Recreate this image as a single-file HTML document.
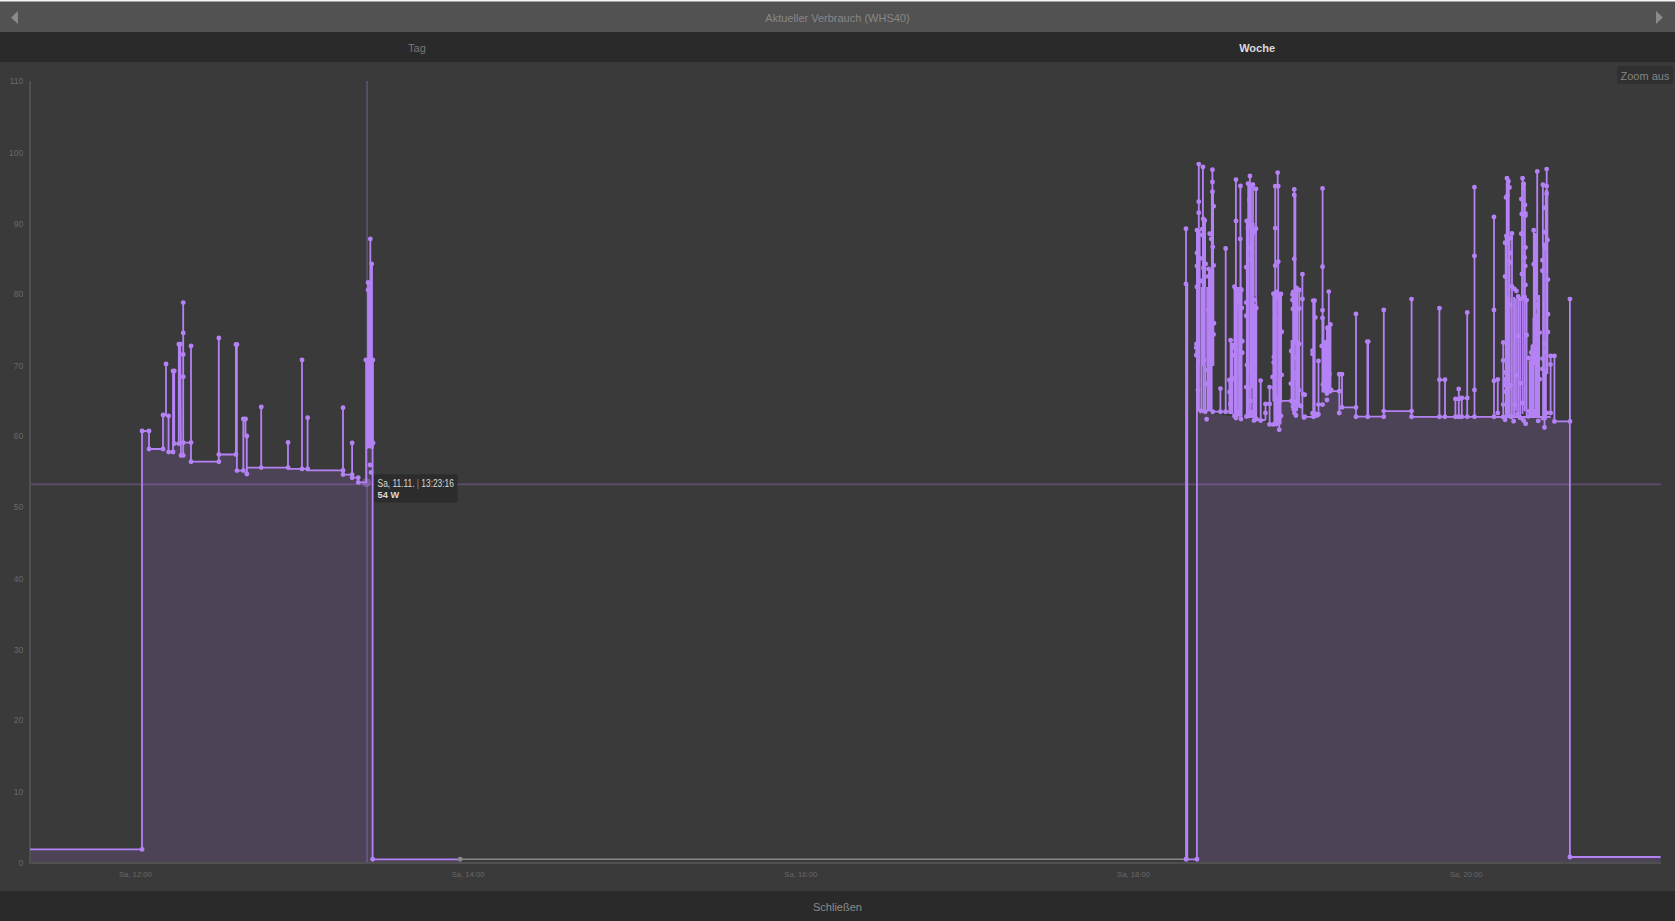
<!DOCTYPE html>
<html lang="de"><head><meta charset="utf-8"><title>Aktueller Verbrauch (WHS40)</title>
<style>
html,body{margin:0;padding:0;background:#3a3a3a;overflow:hidden}
body{width:1675px;height:921px;position:relative;font-family:"Liberation Sans",Arial,sans-serif;color:#888}
.topline{position:absolute;left:0;top:0;width:100%;height:2px;background:linear-gradient(#f6f6f6 0,#f6f6f6 1px,#a4a4a4 1px,#a4a4a4 2px)}
.head{position:absolute;left:0;top:2px;width:100%;height:30px;background:#525252;text-align:center;line-height:33px;font-size:11px;color:#878787}
.arr{position:absolute;top:9px;width:7px;height:13px}
.tabs{position:absolute;left:0;top:32px;width:100%;height:30px;background:#2a2a2a;font-size:11px}
.tabs div{position:absolute;top:0;width:100px;text-align:center;color:#787878;line-height:33px}
.tabs div.on{color:#dcdcdc;font-weight:bold}
.zoom{position:absolute;left:1617px;top:66px;width:56px;height:18px;background:#303030;border-radius:3px;font-size:11px;line-height:21px;text-align:center;color:#858585}
.foot{position:absolute;left:0;top:891px;width:100%;height:30px;background:#2a2a2a;text-align:center;line-height:32px;font-size:11px;color:#8a8a8a}
.ax{font-family:"Liberation Sans",Arial,sans-serif;font-size:8.6px;fill:#686868}
.xl{font-size:7.7px}
.tip{position:absolute;left:374px;top:474px;width:84px;height:28.5px;background:#2b2b2b;border-radius:3px;color:#e0e0e0;font-size:8.6px;line-height:11.5px;box-sizing:border-box;padding:3.5px 0 0 3.5px;white-space:nowrap;letter-spacing:-0.2px}
.tp{font-family:"Liberation Sans",Arial,sans-serif;font-size:10px;fill:#dadada}
.tb{font-weight:bold;font-size:9px}
</style></head><body>
<div class="head">Aktueller Verbrauch (WHS40)
<svg class="arr" style="left:11px" viewBox="0 0 7 13"><path d="M7 0V13L0 6.5Z" fill="#8a8a8a"/></svg>
<svg class="arr" style="left:1656px" viewBox="0 0 7 13"><path d="M0 0V13L7 6.5Z" fill="#8a8a8a"/></svg>
</div>
<div class="topline"></div>
<div class="tabs"><div style="left:366.9px">Tag</div><div class="on" style="left:1207.1px">Woche</div></div>
<svg width="1675" height="829" viewBox="0 62 1675 829" style="position:absolute;left:0;top:62px">
<path d="M30 863 L30 849.4 L142 849.4 L142 431 L149 431 L149 449 L163 449 L163 415 L166 415 L166 364 L166 415.5 L168.6 416 L168.6 452 L173 452 L173 371 L174.2 371 L174.2 443.6 L178.8 443.6 L178.8 344.3 L180.3 344.3 L181 455.4 L183.2 455.4 L183.2 302.6 L183.2 442.6 L191 442.6 L191 346 L191 461.7 L218.8 461.7 L218.8 338 L218.8 454.5 L235.9 454.5 L235.9 344.5 L236.9 344.5 L236.9 470.6 L243.3 470.6 L243.3 419 L245.5 419 L245.5 436 L246.8 436 L246.8 474 L247 467.6 L261.2 467.6 L261.2 407 L261.2 467.6 L288 467.6 L288 442.5 L288 468.9 L302 468.9 L302 360 L302 468.9 L307.6 468.9 L307.6 417.7 L307.6 470.4 L343 470.4 L343 407.7 L343 474.6 L352.1 474.6 L352.1 443 L352.1 477.7 L358.2 477.7 L358.2 482.4 L366.1 482.4 L366.1 482.4 L366.1 360 L366.6 360 L366.6 448 L367.2 448 L367.2 360 L367.6 360 L367.6 445 L368 445 L368 282.5 L368.4 282.5 L368.4 440 L368.8 440 L368.8 290 L369.3 290 L369.3 447 L369.7 447 L369.7 300 L370.3 300 L370.3 238.9 L370.3 238.9 L370.3 445 L370.8 445 L370.8 270 L371.2 270 L371.2 448 L371.6 448 L371.6 264 L372 264 L372 446 L372.3 446 L372.3 360 L372.6 360 L372.6 472.4 L372.6 472.4 L372.6 360 L373 360 L373 448 L372.6 448 L372.6 859.3 L460.2 859.3 L460.2 863Z" fill="#b482f5" fill-opacity="0.15"/>
<path d="M1197 863 L1197 411.7 L1257.5 420 L1273.6 424 L1281.4 400.8 L1291 400.8 L1302.4 404 L1302.4 416.8 L1318.5 416.8 L1322 392 L1330 391.2 L1339.6 391.2 L1339.6 407.4 L1356 407.4 L1356 416.7 L1383.8 416.7 L1383.8 411.1 L1411.6 411.1 L1411.6 416.8 L1554.4 417 L1554.4 421.4 L1569.6 421.4 L1569.6 857 L1660.6 857 L1660.6 863Z" fill="#b482f5" fill-opacity="0.15"/>
<path d="M29 81H31V862H1661V864H29Z" fill="#505050"/>
<path d="M460.2 859.3H1186" stroke="#888" stroke-width="1.4" fill="none"/>
<path d="M30 849.4 L142 849.4 L142 431 L149 431 L149 449 L163 449 L163 415 L166 415 L166 364 L166 415.5 L168.6 416 L168.6 452 L173 452 L173 371 L174.2 371 L174.2 443.6 L178.8 443.6 L178.8 344.3 L180.3 344.3 L181 455.4 L183.2 455.4 L183.2 302.6 L183.2 442.6 L191 442.6 L191 346 L191 461.7 L218.8 461.7 L218.8 338 L218.8 454.5 L235.9 454.5 L235.9 344.5 L236.9 344.5 L236.9 470.6 L243.3 470.6 L243.3 419 L245.5 419 L245.5 436 L246.8 436 L246.8 474 L247 467.6 L261.2 467.6 L261.2 407 L261.2 467.6 L288 467.6 L288 442.5 L288 468.9 L302 468.9 L302 360 L302 468.9 L307.6 468.9 L307.6 417.7 L307.6 470.4 L343 470.4 L343 407.7 L343 474.6 L352.1 474.6 L352.1 443 L352.1 477.7 L358.2 477.7 L358.2 482.4 L366.1 482.4 L366.1 482.4 L366.1 360 L366.6 360 L366.6 448 L367.2 448 L367.2 360 L367.6 360 L367.6 445 L368 445 L368 282.5 L368.4 282.5 L368.4 440 L368.8 440 L368.8 290 L369.3 290 L369.3 447 L369.7 447 L369.7 300 L370.3 300 L370.3 238.9 L370.3 238.9 L370.3 445 L370.8 445 L370.8 270 L371.2 270 L371.2 448 L371.6 448 L371.6 264 L372 264 L372 446 L372.3 446 L372.3 360 L372.6 360 L372.6 472.4 L372.6 472.4 L372.6 360 L373 360 L373 448 L372.6 448 L372.6 859.3 L460.2 859.3M1186 228.7V859.3M1187.3 283.9V859.3M1196.9 230.3V859.3M1198.8 164.1V232M1202.9 166.9V220M1212.4 169.8V195M1201.3 366V411.5M1203.5 366V411.5M1205.4 366V411.5M1220.4 388.6V411.7M1225.7 248.5V411.7M1230.6 340.2V414M1232.2 345V414M1229.4 380V414M1235.9 179.8V290M1240.4 186V240M1249.9 176V186M1253 184.8V225M1256 188.9V420M1260.7 380.6V420.5M1265.5 403.9V420M1269.6 387.1V424.4M1277.7 172.6V187M1275.2 186.3V295M1278.2 186.3V295M1279.2 420V429.7M1294.3 189.4V291M1295.4 195V291M1299.3 290V405M1302.4 274.3V416.8M1318.5 361V414.5M1322.6 188.4V342M1328.8 291.6V327M1339.3 374.2V413M1342 374.2V407.4M1356 313.9V416.7M1383.8 309.9V416.7M1411.6 299.1V416.8M1439.4 308.3V416.8M1445 379.8V416.8M1455.4 399V416.8M1458.8 389V416.8M1461.8 398V416.8M1467.2 312.5V416.8M1474.5 187.2V416.8M1494 217V416.8M1497.8 379.5V413M1503.2 342.5V417M1507 178.3V190M1508.5 181.3V190M1512 233.4V417M1516 298.3V411.5M1518.1 296.4V415.1M1520.1 299V418.3M1522.5 300V414M1524.6 297V411.2M1526.6 300.1V416.4M1522.6 178.3V190M1523.7 183.6V190M1533.8 230.3V320M1535.5 233V320M1537.2 171.4V300M1542.9 184.7V247M1546.7 169.1V192M1544.5 418V427.5M1550.6 355.9V413M1554.4 355.9V421.4M1569.9 299.1V857M1186.4 859.3H1197M1213 411.7H1229M1229.6 340.2H1233.6M1257 420H1265.5M1264.8 403.9H1269.6M1269.6 424.4H1273.4M1281.5 400.8H1290.6M1302.4 416.8H1318.5M1318.5 404.6H1322.6M1330.6 391.2H1339.8M1339.3 374.2H1342M1342 407.4H1356M1356 416.7H1383.8M1383.8 411.1H1411.6M1411.6 416.8H1495M1439.4 379.8H1445M1455.4 398.4H1467.2M1494 380.3H1497.8M1495 417H1550.6M1550.6 355.9H1554.4M1548 413H1552.5M1554.4 421.4H1569.6M1569.6 857H1660.6" fill="none" stroke="#b482f5" stroke-width="1.8" stroke-linejoin="round"/>
<path d="M1196 230H1200.6V290H1196ZM1202 219H1206V290H1202ZM1210.9 192H1214V270H1210.9ZM1208 269H1214.3V334H1208ZM1196 287H1214.3V366H1196ZM1196 366H1199.9V411.5H1196ZM1206.7 366H1212.6V411.5H1206.7ZM1239.5 239H1241.6V290H1239.5ZM1233.6 287H1242.5V416.7H1233.6ZM1247.3 183.6H1251.9V225H1247.3ZM1245.9 222.8H1254.6V418H1245.9ZM1254.6 300H1257.2V418H1254.6ZM1272.4 293.7H1282V401.6H1272.4ZM1273.4 401H1281.5V424.4H1273.4ZM1292.2 290H1298.3V341H1292.2ZM1290.6 340H1299.2V404H1290.6ZM1291.5 404H1298V411H1291.5ZM1312.3 300.6H1315.6V416.8H1312.3ZM1321.6 318H1324.4V342H1321.6ZM1326 325.5H1331.4V392H1326ZM1321.5 340H1331.4V392.4H1321.5ZM1366.5 341.6H1369V416.7H1366.5ZM1505.8 183H1509.7V238H1505.8ZM1504.8 236H1510.5V417H1504.8ZM1505 297H1515V417H1505ZM1521.1 183H1525.8V300H1521.1ZM1528.7 360.5H1540V417H1528.7ZM1536.5 295H1540V361H1536.5ZM1532.5 318H1536.5V361H1532.5ZM1530.5 345H1532.5V361H1530.5ZM1544.8 190H1548.3V247H1544.8ZM1542.2 245H1548.3V374H1542.2ZM1542.2 374H1546.8V420H1542.2Z" fill="#b482f5"/>
<path d="M1200.5 287V366" stroke="#40384a" stroke-width="0.9" stroke-opacity="0.45"/>
<path d="M1206 287V366" stroke="#40384a" stroke-width="1.1" stroke-opacity="0.5"/>
<path d="M1252 388V410" stroke="#40384a" stroke-width="1.3" stroke-opacity="0.45"/>
<path d="M1254.9 296V307" stroke="#40384a" stroke-width="1.2" stroke-opacity="0.6"/>
<path d="M1510.6 297V415" stroke="#40384a" stroke-width="0.8" stroke-opacity="0.4"/>
<path d="M1512.9 297V415" stroke="#40384a" stroke-width="0.8" stroke-opacity="0.4"/>
<path d="M1277.3 300V395" stroke="#40384a" stroke-width="0.7" stroke-opacity="0.3"/>
<path d="M1238 300V410" stroke="#40384a" stroke-width="0.7" stroke-opacity="0.25"/>
<path d="M1295 345V400" stroke="#40384a" stroke-width="0.7" stroke-opacity="0.3"/>
<path d="M1534.5 365V412" stroke="#40384a" stroke-width="0.8" stroke-opacity="0.35"/>
<path d="M1545.2 250V370" stroke="#40384a" stroke-width="0.7" stroke-opacity="0.3"/>
<path d="M1249.5 230V410" stroke="#40384a" stroke-width="0.7" stroke-opacity="0.25"/>
<path d="M1523.4 190V296" stroke="#40384a" stroke-width="0.7" stroke-opacity="0.25"/>
<path d="M1507.6 240V296" stroke="#40384a" stroke-width="0.7" stroke-opacity="0.25"/>
<path d="M139.6 849.4a2.45 2.45 0 1 0 4.9 0a2.45 2.45 0 1 0 -4.9 0M139.6 431a2.45 2.45 0 1 0 4.9 0a2.45 2.45 0 1 0 -4.9 0M146.6 431a2.45 2.45 0 1 0 4.9 0a2.45 2.45 0 1 0 -4.9 0M146.6 449a2.45 2.45 0 1 0 4.9 0a2.45 2.45 0 1 0 -4.9 0M160.6 449a2.45 2.45 0 1 0 4.9 0a2.45 2.45 0 1 0 -4.9 0M160.6 415a2.45 2.45 0 1 0 4.9 0a2.45 2.45 0 1 0 -4.9 0M163.6 364a2.45 2.45 0 1 0 4.9 0a2.45 2.45 0 1 0 -4.9 0M166.2 416a2.45 2.45 0 1 0 4.9 0a2.45 2.45 0 1 0 -4.9 0M166.2 452a2.45 2.45 0 1 0 4.9 0a2.45 2.45 0 1 0 -4.9 0M170.6 452a2.45 2.45 0 1 0 4.9 0a2.45 2.45 0 1 0 -4.9 0M170.6 371a2.45 2.45 0 1 0 4.9 0a2.45 2.45 0 1 0 -4.9 0M171.8 371a2.45 2.45 0 1 0 4.9 0a2.45 2.45 0 1 0 -4.9 0M171.8 443.6a2.45 2.45 0 1 0 4.9 0a2.45 2.45 0 1 0 -4.9 0M176.4 443.6a2.45 2.45 0 1 0 4.9 0a2.45 2.45 0 1 0 -4.9 0M176.4 344.3a2.45 2.45 0 1 0 4.9 0a2.45 2.45 0 1 0 -4.9 0M177.9 344.3a2.45 2.45 0 1 0 4.9 0a2.45 2.45 0 1 0 -4.9 0M178.6 455.4a2.45 2.45 0 1 0 4.9 0a2.45 2.45 0 1 0 -4.9 0M180.8 455.4a2.45 2.45 0 1 0 4.9 0a2.45 2.45 0 1 0 -4.9 0M180.8 302.6a2.45 2.45 0 1 0 4.9 0a2.45 2.45 0 1 0 -4.9 0M180.8 333a2.45 2.45 0 1 0 4.9 0a2.45 2.45 0 1 0 -4.9 0M180.8 354.5a2.45 2.45 0 1 0 4.9 0a2.45 2.45 0 1 0 -4.9 0M180.8 376.8a2.45 2.45 0 1 0 4.9 0a2.45 2.45 0 1 0 -4.9 0M180.8 442.6a2.45 2.45 0 1 0 4.9 0a2.45 2.45 0 1 0 -4.9 0M188.6 442.6a2.45 2.45 0 1 0 4.9 0a2.45 2.45 0 1 0 -4.9 0M188.6 346a2.45 2.45 0 1 0 4.9 0a2.45 2.45 0 1 0 -4.9 0M188.6 461.7a2.45 2.45 0 1 0 4.9 0a2.45 2.45 0 1 0 -4.9 0M216.4 461.7a2.45 2.45 0 1 0 4.9 0a2.45 2.45 0 1 0 -4.9 0M216.4 338a2.45 2.45 0 1 0 4.9 0a2.45 2.45 0 1 0 -4.9 0M216.4 454.5a2.45 2.45 0 1 0 4.9 0a2.45 2.45 0 1 0 -4.9 0M233.5 454.5a2.45 2.45 0 1 0 4.9 0a2.45 2.45 0 1 0 -4.9 0M233.5 344.5a2.45 2.45 0 1 0 4.9 0a2.45 2.45 0 1 0 -4.9 0M234.5 344.5a2.45 2.45 0 1 0 4.9 0a2.45 2.45 0 1 0 -4.9 0M234.5 470.6a2.45 2.45 0 1 0 4.9 0a2.45 2.45 0 1 0 -4.9 0M240.9 419a2.45 2.45 0 1 0 4.9 0a2.45 2.45 0 1 0 -4.9 0M243.1 419a2.45 2.45 0 1 0 4.9 0a2.45 2.45 0 1 0 -4.9 0M244.4 436a2.45 2.45 0 1 0 4.9 0a2.45 2.45 0 1 0 -4.9 0M244.4 474a2.45 2.45 0 1 0 4.9 0a2.45 2.45 0 1 0 -4.9 0M240.9 470.6a2.45 2.45 0 1 0 4.9 0a2.45 2.45 0 1 0 -4.9 0M258.8 467.6a2.45 2.45 0 1 0 4.9 0a2.45 2.45 0 1 0 -4.9 0M258.8 407a2.45 2.45 0 1 0 4.9 0a2.45 2.45 0 1 0 -4.9 0M285.6 467.6a2.45 2.45 0 1 0 4.9 0a2.45 2.45 0 1 0 -4.9 0M285.6 442.5a2.45 2.45 0 1 0 4.9 0a2.45 2.45 0 1 0 -4.9 0M299.6 468.9a2.45 2.45 0 1 0 4.9 0a2.45 2.45 0 1 0 -4.9 0M299.6 360a2.45 2.45 0 1 0 4.9 0a2.45 2.45 0 1 0 -4.9 0M305.2 468.9a2.45 2.45 0 1 0 4.9 0a2.45 2.45 0 1 0 -4.9 0M305.2 417.7a2.45 2.45 0 1 0 4.9 0a2.45 2.45 0 1 0 -4.9 0M340.6 470.4a2.45 2.45 0 1 0 4.9 0a2.45 2.45 0 1 0 -4.9 0M340.6 407.7a2.45 2.45 0 1 0 4.9 0a2.45 2.45 0 1 0 -4.9 0M340.6 474.6a2.45 2.45 0 1 0 4.9 0a2.45 2.45 0 1 0 -4.9 0M349.7 474.6a2.45 2.45 0 1 0 4.9 0a2.45 2.45 0 1 0 -4.9 0M349.7 443a2.45 2.45 0 1 0 4.9 0a2.45 2.45 0 1 0 -4.9 0M349.7 477.7a2.45 2.45 0 1 0 4.9 0a2.45 2.45 0 1 0 -4.9 0M355.8 477.7a2.45 2.45 0 1 0 4.9 0a2.45 2.45 0 1 0 -4.9 0M355.8 482.4a2.45 2.45 0 1 0 4.9 0a2.45 2.45 0 1 0 -4.9 0M367.9 238.9a2.45 2.45 0 1 0 4.9 0a2.45 2.45 0 1 0 -4.9 0M369.2 264a2.45 2.45 0 1 0 4.9 0a2.45 2.45 0 1 0 -4.9 0M365.6 282.5a2.45 2.45 0 1 0 4.9 0a2.45 2.45 0 1 0 -4.9 0M365.6 290a2.45 2.45 0 1 0 4.9 0a2.45 2.45 0 1 0 -4.9 0M363.4 360a2.45 2.45 0 1 0 4.9 0a2.45 2.45 0 1 0 -4.9 0M366.6 360a2.45 2.45 0 1 0 4.9 0a2.45 2.45 0 1 0 -4.9 0M370.4 360a2.45 2.45 0 1 0 4.9 0a2.45 2.45 0 1 0 -4.9 0M367.6 385a2.45 2.45 0 1 0 4.9 0a2.45 2.45 0 1 0 -4.9 0M367.6 417a2.45 2.45 0 1 0 4.9 0a2.45 2.45 0 1 0 -4.9 0M370.6 443a2.45 2.45 0 1 0 4.9 0a2.45 2.45 0 1 0 -4.9 0M366.6 446a2.45 2.45 0 1 0 4.9 0a2.45 2.45 0 1 0 -4.9 0M368.6 472.4a2.45 2.45 0 1 0 4.9 0a2.45 2.45 0 1 0 -4.9 0M367.6 465a2.45 2.45 0 1 0 4.9 0a2.45 2.45 0 1 0 -4.9 0M370.2 859.3a2.45 2.45 0 1 0 4.9 0a2.45 2.45 0 1 0 -4.9 0M1183.5 228.7a2.45 2.45 0 1 0 4.9 0a2.45 2.45 0 1 0 -4.9 0M1183.5 283.9a2.45 2.45 0 1 0 4.9 0a2.45 2.45 0 1 0 -4.9 0M1183.5 859.3a2.45 2.45 0 1 0 4.9 0a2.45 2.45 0 1 0 -4.9 0M1184 859.3a2.45 2.45 0 1 0 4.9 0a2.45 2.45 0 1 0 -4.9 0M1194.5 859.3a2.45 2.45 0 1 0 4.9 0a2.45 2.45 0 1 0 -4.9 0M1194.5 230.3a2.45 2.45 0 1 0 4.9 0a2.45 2.45 0 1 0 -4.9 0M1194.5 253a2.45 2.45 0 1 0 4.9 0a2.45 2.45 0 1 0 -4.9 0M1194.5 266a2.45 2.45 0 1 0 4.9 0a2.45 2.45 0 1 0 -4.9 0M1194.5 287a2.45 2.45 0 1 0 4.9 0a2.45 2.45 0 1 0 -4.9 0M1196.3 164.1a2.45 2.45 0 1 0 4.9 0a2.45 2.45 0 1 0 -4.9 0M1196.3 201.8a2.45 2.45 0 1 0 4.9 0a2.45 2.45 0 1 0 -4.9 0M1196.3 212.8a2.45 2.45 0 1 0 4.9 0a2.45 2.45 0 1 0 -4.9 0M1200.5 166.9a2.45 2.45 0 1 0 4.9 0a2.45 2.45 0 1 0 -4.9 0M1200.8 218.9a2.45 2.45 0 1 0 4.9 0a2.45 2.45 0 1 0 -4.9 0M1202.3 220.5a2.45 2.45 0 1 0 4.9 0a2.45 2.45 0 1 0 -4.9 0M1201 267.9a2.45 2.45 0 1 0 4.9 0a2.45 2.45 0 1 0 -4.9 0M1201.2 282.8a2.45 2.45 0 1 0 4.9 0a2.45 2.45 0 1 0 -4.9 0M1210 169.8a2.45 2.45 0 1 0 4.9 0a2.45 2.45 0 1 0 -4.9 0M1210 182a2.45 2.45 0 1 0 4.9 0a2.45 2.45 0 1 0 -4.9 0M1210 191.8a2.45 2.45 0 1 0 4.9 0a2.45 2.45 0 1 0 -4.9 0M1207.3 233.8a2.45 2.45 0 1 0 4.9 0a2.45 2.45 0 1 0 -4.9 0M1210.3 247a2.45 2.45 0 1 0 4.9 0a2.45 2.45 0 1 0 -4.9 0M1206.1 269a2.45 2.45 0 1 0 4.9 0a2.45 2.45 0 1 0 -4.9 0M1211.1 334.5a2.45 2.45 0 1 0 4.9 0a2.45 2.45 0 1 0 -4.9 0M1194 344a2.45 2.45 0 1 0 4.9 0a2.45 2.45 0 1 0 -4.9 0M1195 352a2.45 2.45 0 1 0 4.9 0a2.45 2.45 0 1 0 -4.9 0M1195.5 390a2.45 2.45 0 1 0 4.9 0a2.45 2.45 0 1 0 -4.9 0M1198.5 411a2.45 2.45 0 1 0 4.9 0a2.45 2.45 0 1 0 -4.9 0M1202.8 411.7a2.45 2.45 0 1 0 4.9 0a2.45 2.45 0 1 0 -4.9 0M1210.3 411.7a2.45 2.45 0 1 0 4.9 0a2.45 2.45 0 1 0 -4.9 0M1204.2 419.3a2.45 2.45 0 1 0 4.9 0a2.45 2.45 0 1 0 -4.9 0M1201.5 360a2.45 2.45 0 1 0 4.9 0a2.45 2.45 0 1 0 -4.9 0M1205.5 370a2.45 2.45 0 1 0 4.9 0a2.45 2.45 0 1 0 -4.9 0M1203.5 384a2.45 2.45 0 1 0 4.9 0a2.45 2.45 0 1 0 -4.9 0M1218 388.6a2.45 2.45 0 1 0 4.9 0a2.45 2.45 0 1 0 -4.9 0M1218 411.7a2.45 2.45 0 1 0 4.9 0a2.45 2.45 0 1 0 -4.9 0M1223.2 248.5a2.45 2.45 0 1 0 4.9 0a2.45 2.45 0 1 0 -4.9 0M1223.2 411.7a2.45 2.45 0 1 0 4.9 0a2.45 2.45 0 1 0 -4.9 0M1228.1 340.2a2.45 2.45 0 1 0 4.9 0a2.45 2.45 0 1 0 -4.9 0M1229.8 345a2.45 2.45 0 1 0 4.9 0a2.45 2.45 0 1 0 -4.9 0M1227 380a2.45 2.45 0 1 0 4.9 0a2.45 2.45 0 1 0 -4.9 0M1228.5 382a2.45 2.45 0 1 0 4.9 0a2.45 2.45 0 1 0 -4.9 0M1227.1 392a2.45 2.45 0 1 0 4.9 0a2.45 2.45 0 1 0 -4.9 0M1228 404a2.45 2.45 0 1 0 4.9 0a2.45 2.45 0 1 0 -4.9 0M1233.5 179.8a2.45 2.45 0 1 0 4.9 0a2.45 2.45 0 1 0 -4.9 0M1233.5 221a2.45 2.45 0 1 0 4.9 0a2.45 2.45 0 1 0 -4.9 0M1238 186a2.45 2.45 0 1 0 4.9 0a2.45 2.45 0 1 0 -4.9 0M1237.8 239a2.45 2.45 0 1 0 4.9 0a2.45 2.45 0 1 0 -4.9 0M1232 286.7a2.45 2.45 0 1 0 4.9 0a2.45 2.45 0 1 0 -4.9 0M1233.5 289.5a2.45 2.45 0 1 0 4.9 0a2.45 2.45 0 1 0 -4.9 0M1239 290a2.45 2.45 0 1 0 4.9 0a2.45 2.45 0 1 0 -4.9 0M1234 296a2.45 2.45 0 1 0 4.9 0a2.45 2.45 0 1 0 -4.9 0M1234.5 303a2.45 2.45 0 1 0 4.9 0a2.45 2.45 0 1 0 -4.9 0M1239.3 308a2.45 2.45 0 1 0 4.9 0a2.45 2.45 0 1 0 -4.9 0M1232 416a2.45 2.45 0 1 0 4.9 0a2.45 2.45 0 1 0 -4.9 0M1233.5 418a2.45 2.45 0 1 0 4.9 0a2.45 2.45 0 1 0 -4.9 0M1238.5 419a2.45 2.45 0 1 0 4.9 0a2.45 2.45 0 1 0 -4.9 0M1247.5 176a2.45 2.45 0 1 0 4.9 0a2.45 2.45 0 1 0 -4.9 0M1250.5 184.8a2.45 2.45 0 1 0 4.9 0a2.45 2.45 0 1 0 -4.9 0M1253.5 188.9a2.45 2.45 0 1 0 4.9 0a2.45 2.45 0 1 0 -4.9 0M1253.5 228.8a2.45 2.45 0 1 0 4.9 0a2.45 2.45 0 1 0 -4.9 0M1245.6 183.6a2.45 2.45 0 1 0 4.9 0a2.45 2.45 0 1 0 -4.9 0M1250.1 184.8a2.45 2.45 0 1 0 4.9 0a2.45 2.45 0 1 0 -4.9 0M1247.1 200a2.45 2.45 0 1 0 4.9 0a2.45 2.45 0 1 0 -4.9 0M1244.3 221a2.45 2.45 0 1 0 4.9 0a2.45 2.45 0 1 0 -4.9 0M1245.5 228.5a2.45 2.45 0 1 0 4.9 0a2.45 2.45 0 1 0 -4.9 0M1248.3 248a2.45 2.45 0 1 0 4.9 0a2.45 2.45 0 1 0 -4.9 0M1248.5 259a2.45 2.45 0 1 0 4.9 0a2.45 2.45 0 1 0 -4.9 0M1244 316a2.45 2.45 0 1 0 4.9 0a2.45 2.45 0 1 0 -4.9 0M1253.8 308a2.45 2.45 0 1 0 4.9 0a2.45 2.45 0 1 0 -4.9 0M1244.5 365a2.45 2.45 0 1 0 4.9 0a2.45 2.45 0 1 0 -4.9 0M1249 368a2.45 2.45 0 1 0 4.9 0a2.45 2.45 0 1 0 -4.9 0M1245.5 388a2.45 2.45 0 1 0 4.9 0a2.45 2.45 0 1 0 -4.9 0M1248 401a2.45 2.45 0 1 0 4.9 0a2.45 2.45 0 1 0 -4.9 0M1244 416.5a2.45 2.45 0 1 0 4.9 0a2.45 2.45 0 1 0 -4.9 0M1246.5 416a2.45 2.45 0 1 0 4.9 0a2.45 2.45 0 1 0 -4.9 0M1251.5 420.5a2.45 2.45 0 1 0 4.9 0a2.45 2.45 0 1 0 -4.9 0M1254 419a2.45 2.45 0 1 0 4.9 0a2.45 2.45 0 1 0 -4.9 0M1258.2 380.6a2.45 2.45 0 1 0 4.9 0a2.45 2.45 0 1 0 -4.9 0M1258.2 420.5a2.45 2.45 0 1 0 4.9 0a2.45 2.45 0 1 0 -4.9 0M1263 403.9a2.45 2.45 0 1 0 4.9 0a2.45 2.45 0 1 0 -4.9 0M1263 413a2.45 2.45 0 1 0 4.9 0a2.45 2.45 0 1 0 -4.9 0M1267.1 387.1a2.45 2.45 0 1 0 4.9 0a2.45 2.45 0 1 0 -4.9 0M1267.1 403.9a2.45 2.45 0 1 0 4.9 0a2.45 2.45 0 1 0 -4.9 0M1267.1 424.4a2.45 2.45 0 1 0 4.9 0a2.45 2.45 0 1 0 -4.9 0M1267.1 424.4a2.45 2.45 0 1 0 4.9 0a2.45 2.45 0 1 0 -4.9 0M1271 424.4a2.45 2.45 0 1 0 4.9 0a2.45 2.45 0 1 0 -4.9 0M1275.2 172.6a2.45 2.45 0 1 0 4.9 0a2.45 2.45 0 1 0 -4.9 0M1272.8 186.3a2.45 2.45 0 1 0 4.9 0a2.45 2.45 0 1 0 -4.9 0M1272.8 228.2a2.45 2.45 0 1 0 4.9 0a2.45 2.45 0 1 0 -4.9 0M1272.8 265.8a2.45 2.45 0 1 0 4.9 0a2.45 2.45 0 1 0 -4.9 0M1275.8 186.3a2.45 2.45 0 1 0 4.9 0a2.45 2.45 0 1 0 -4.9 0M1275.8 261.7a2.45 2.45 0 1 0 4.9 0a2.45 2.45 0 1 0 -4.9 0M1271 293.7a2.45 2.45 0 1 0 4.9 0a2.45 2.45 0 1 0 -4.9 0M1274.5 292a2.45 2.45 0 1 0 4.9 0a2.45 2.45 0 1 0 -4.9 0M1278.5 294a2.45 2.45 0 1 0 4.9 0a2.45 2.45 0 1 0 -4.9 0M1277 318a2.45 2.45 0 1 0 4.9 0a2.45 2.45 0 1 0 -4.9 0M1271.5 357a2.45 2.45 0 1 0 4.9 0a2.45 2.45 0 1 0 -4.9 0M1271.3 362.5a2.45 2.45 0 1 0 4.9 0a2.45 2.45 0 1 0 -4.9 0M1272 388a2.45 2.45 0 1 0 4.9 0a2.45 2.45 0 1 0 -4.9 0M1275.5 400a2.45 2.45 0 1 0 4.9 0a2.45 2.45 0 1 0 -4.9 0M1277 402a2.45 2.45 0 1 0 4.9 0a2.45 2.45 0 1 0 -4.9 0M1276.1 412a2.45 2.45 0 1 0 4.9 0a2.45 2.45 0 1 0 -4.9 0M1278.5 416a2.45 2.45 0 1 0 4.9 0a2.45 2.45 0 1 0 -4.9 0M1276.8 429.7a2.45 2.45 0 1 0 4.9 0a2.45 2.45 0 1 0 -4.9 0M1274 424a2.45 2.45 0 1 0 4.9 0a2.45 2.45 0 1 0 -4.9 0M1291.8 189.4a2.45 2.45 0 1 0 4.9 0a2.45 2.45 0 1 0 -4.9 0M1291.8 195a2.45 2.45 0 1 0 4.9 0a2.45 2.45 0 1 0 -4.9 0M1291.8 259a2.45 2.45 0 1 0 4.9 0a2.45 2.45 0 1 0 -4.9 0M1296.8 290a2.45 2.45 0 1 0 4.9 0a2.45 2.45 0 1 0 -4.9 0M1296.8 308.5a2.45 2.45 0 1 0 4.9 0a2.45 2.45 0 1 0 -4.9 0M1296.8 344a2.45 2.45 0 1 0 4.9 0a2.45 2.45 0 1 0 -4.9 0M1290.8 292a2.45 2.45 0 1 0 4.9 0a2.45 2.45 0 1 0 -4.9 0M1294 288a2.45 2.45 0 1 0 4.9 0a2.45 2.45 0 1 0 -4.9 0M1291.5 297.5a2.45 2.45 0 1 0 4.9 0a2.45 2.45 0 1 0 -4.9 0M1290.5 309a2.45 2.45 0 1 0 4.9 0a2.45 2.45 0 1 0 -4.9 0M1288.8 351a2.45 2.45 0 1 0 4.9 0a2.45 2.45 0 1 0 -4.9 0M1292 357.5a2.45 2.45 0 1 0 4.9 0a2.45 2.45 0 1 0 -4.9 0M1294 373a2.45 2.45 0 1 0 4.9 0a2.45 2.45 0 1 0 -4.9 0M1292 378a2.45 2.45 0 1 0 4.9 0a2.45 2.45 0 1 0 -4.9 0M1289 401a2.45 2.45 0 1 0 4.9 0a2.45 2.45 0 1 0 -4.9 0M1290.5 406.5a2.45 2.45 0 1 0 4.9 0a2.45 2.45 0 1 0 -4.9 0M1292 413a2.45 2.45 0 1 0 4.9 0a2.45 2.45 0 1 0 -4.9 0M1293.5 415.5a2.45 2.45 0 1 0 4.9 0a2.45 2.45 0 1 0 -4.9 0M1297 405.5a2.45 2.45 0 1 0 4.9 0a2.45 2.45 0 1 0 -4.9 0M1298.5 406a2.45 2.45 0 1 0 4.9 0a2.45 2.45 0 1 0 -4.9 0M1300 274.3a2.45 2.45 0 1 0 4.9 0a2.45 2.45 0 1 0 -4.9 0M1300 299a2.45 2.45 0 1 0 4.9 0a2.45 2.45 0 1 0 -4.9 0M1300.8 394.3a2.45 2.45 0 1 0 4.9 0a2.45 2.45 0 1 0 -4.9 0M1301.5 417.6a2.45 2.45 0 1 0 4.9 0a2.45 2.45 0 1 0 -4.9 0M1310.8 300.6a2.45 2.45 0 1 0 4.9 0a2.45 2.45 0 1 0 -4.9 0M1312.1 300.6a2.45 2.45 0 1 0 4.9 0a2.45 2.45 0 1 0 -4.9 0M1311 416.8a2.45 2.45 0 1 0 4.9 0a2.45 2.45 0 1 0 -4.9 0M1302.3 394.7a2.45 2.45 0 1 0 4.9 0a2.45 2.45 0 1 0 -4.9 0M1302.3 416.8a2.45 2.45 0 1 0 4.9 0a2.45 2.45 0 1 0 -4.9 0M1316 361a2.45 2.45 0 1 0 4.9 0a2.45 2.45 0 1 0 -4.9 0M1316 404.6a2.45 2.45 0 1 0 4.9 0a2.45 2.45 0 1 0 -4.9 0M1316 414.5a2.45 2.45 0 1 0 4.9 0a2.45 2.45 0 1 0 -4.9 0M1316 404.6a2.45 2.45 0 1 0 4.9 0a2.45 2.45 0 1 0 -4.9 0M1320.1 404.6a2.45 2.45 0 1 0 4.9 0a2.45 2.45 0 1 0 -4.9 0M1320.1 188.4a2.45 2.45 0 1 0 4.9 0a2.45 2.45 0 1 0 -4.9 0M1320.1 266.8a2.45 2.45 0 1 0 4.9 0a2.45 2.45 0 1 0 -4.9 0M1320.1 310.2a2.45 2.45 0 1 0 4.9 0a2.45 2.45 0 1 0 -4.9 0M1320.1 318a2.45 2.45 0 1 0 4.9 0a2.45 2.45 0 1 0 -4.9 0M1326.3 291.6a2.45 2.45 0 1 0 4.9 0a2.45 2.45 0 1 0 -4.9 0M1328 324.5a2.45 2.45 0 1 0 4.9 0a2.45 2.45 0 1 0 -4.9 0M1325 328a2.45 2.45 0 1 0 4.9 0a2.45 2.45 0 1 0 -4.9 0M1323.5 348a2.45 2.45 0 1 0 4.9 0a2.45 2.45 0 1 0 -4.9 0M1325 356a2.45 2.45 0 1 0 4.9 0a2.45 2.45 0 1 0 -4.9 0M1326.5 363a2.45 2.45 0 1 0 4.9 0a2.45 2.45 0 1 0 -4.9 0M1327 374a2.45 2.45 0 1 0 4.9 0a2.45 2.45 0 1 0 -4.9 0M1320.5 384.5a2.45 2.45 0 1 0 4.9 0a2.45 2.45 0 1 0 -4.9 0M1321.5 390a2.45 2.45 0 1 0 4.9 0a2.45 2.45 0 1 0 -4.9 0M1324.5 393.5a2.45 2.45 0 1 0 4.9 0a2.45 2.45 0 1 0 -4.9 0M1324.5 400a2.45 2.45 0 1 0 4.9 0a2.45 2.45 0 1 0 -4.9 0M1327.8 391.2a2.45 2.45 0 1 0 4.9 0a2.45 2.45 0 1 0 -4.9 0M1336.8 374.2a2.45 2.45 0 1 0 4.9 0a2.45 2.45 0 1 0 -4.9 0M1336.8 391.2a2.45 2.45 0 1 0 4.9 0a2.45 2.45 0 1 0 -4.9 0M1336.8 413a2.45 2.45 0 1 0 4.9 0a2.45 2.45 0 1 0 -4.9 0M1339.5 374.2a2.45 2.45 0 1 0 4.9 0a2.45 2.45 0 1 0 -4.9 0M1339.5 407.4a2.45 2.45 0 1 0 4.9 0a2.45 2.45 0 1 0 -4.9 0M1353.5 313.9a2.45 2.45 0 1 0 4.9 0a2.45 2.45 0 1 0 -4.9 0M1353.5 407.4a2.45 2.45 0 1 0 4.9 0a2.45 2.45 0 1 0 -4.9 0M1353.5 416.7a2.45 2.45 0 1 0 4.9 0a2.45 2.45 0 1 0 -4.9 0M1364.8 341.6a2.45 2.45 0 1 0 4.9 0a2.45 2.45 0 1 0 -4.9 0M1365.8 341.6a2.45 2.45 0 1 0 4.9 0a2.45 2.45 0 1 0 -4.9 0M1365.3 416.7a2.45 2.45 0 1 0 4.9 0a2.45 2.45 0 1 0 -4.9 0M1381.3 309.9a2.45 2.45 0 1 0 4.9 0a2.45 2.45 0 1 0 -4.9 0M1381.3 411.1a2.45 2.45 0 1 0 4.9 0a2.45 2.45 0 1 0 -4.9 0M1381.3 416.7a2.45 2.45 0 1 0 4.9 0a2.45 2.45 0 1 0 -4.9 0M1409.1 299.1a2.45 2.45 0 1 0 4.9 0a2.45 2.45 0 1 0 -4.9 0M1409.1 411.1a2.45 2.45 0 1 0 4.9 0a2.45 2.45 0 1 0 -4.9 0M1409.1 416.8a2.45 2.45 0 1 0 4.9 0a2.45 2.45 0 1 0 -4.9 0M1437 308.3a2.45 2.45 0 1 0 4.9 0a2.45 2.45 0 1 0 -4.9 0M1437 379.8a2.45 2.45 0 1 0 4.9 0a2.45 2.45 0 1 0 -4.9 0M1437 416.8a2.45 2.45 0 1 0 4.9 0a2.45 2.45 0 1 0 -4.9 0M1442.5 379.8a2.45 2.45 0 1 0 4.9 0a2.45 2.45 0 1 0 -4.9 0M1442.5 416.8a2.45 2.45 0 1 0 4.9 0a2.45 2.45 0 1 0 -4.9 0M1453 399a2.45 2.45 0 1 0 4.9 0a2.45 2.45 0 1 0 -4.9 0M1453 416.8a2.45 2.45 0 1 0 4.9 0a2.45 2.45 0 1 0 -4.9 0M1456.3 389a2.45 2.45 0 1 0 4.9 0a2.45 2.45 0 1 0 -4.9 0M1456.3 399a2.45 2.45 0 1 0 4.9 0a2.45 2.45 0 1 0 -4.9 0M1456.3 416.8a2.45 2.45 0 1 0 4.9 0a2.45 2.45 0 1 0 -4.9 0M1459.3 398a2.45 2.45 0 1 0 4.9 0a2.45 2.45 0 1 0 -4.9 0M1459.3 416.8a2.45 2.45 0 1 0 4.9 0a2.45 2.45 0 1 0 -4.9 0M1464.8 312.5a2.45 2.45 0 1 0 4.9 0a2.45 2.45 0 1 0 -4.9 0M1464.8 398a2.45 2.45 0 1 0 4.9 0a2.45 2.45 0 1 0 -4.9 0M1464.8 416.8a2.45 2.45 0 1 0 4.9 0a2.45 2.45 0 1 0 -4.9 0M1472 187.2a2.45 2.45 0 1 0 4.9 0a2.45 2.45 0 1 0 -4.9 0M1472 256a2.45 2.45 0 1 0 4.9 0a2.45 2.45 0 1 0 -4.9 0M1472 390a2.45 2.45 0 1 0 4.9 0a2.45 2.45 0 1 0 -4.9 0M1472 416.8a2.45 2.45 0 1 0 4.9 0a2.45 2.45 0 1 0 -4.9 0M1491.5 217a2.45 2.45 0 1 0 4.9 0a2.45 2.45 0 1 0 -4.9 0M1491.5 310a2.45 2.45 0 1 0 4.9 0a2.45 2.45 0 1 0 -4.9 0M1491.5 380.9a2.45 2.45 0 1 0 4.9 0a2.45 2.45 0 1 0 -4.9 0M1491.5 416.8a2.45 2.45 0 1 0 4.9 0a2.45 2.45 0 1 0 -4.9 0M1495.3 379.5a2.45 2.45 0 1 0 4.9 0a2.45 2.45 0 1 0 -4.9 0M1495.3 413a2.45 2.45 0 1 0 4.9 0a2.45 2.45 0 1 0 -4.9 0M1500.8 342.5a2.45 2.45 0 1 0 4.9 0a2.45 2.45 0 1 0 -4.9 0M1500.8 360.5a2.45 2.45 0 1 0 4.9 0a2.45 2.45 0 1 0 -4.9 0M1500.8 404.6a2.45 2.45 0 1 0 4.9 0a2.45 2.45 0 1 0 -4.9 0M1500.8 417a2.45 2.45 0 1 0 4.9 0a2.45 2.45 0 1 0 -4.9 0M1504.5 178.3a2.45 2.45 0 1 0 4.9 0a2.45 2.45 0 1 0 -4.9 0M1506 181.3a2.45 2.45 0 1 0 4.9 0a2.45 2.45 0 1 0 -4.9 0M1505 195.8a2.45 2.45 0 1 0 4.9 0a2.45 2.45 0 1 0 -4.9 0M1509.5 233.4a2.45 2.45 0 1 0 4.9 0a2.45 2.45 0 1 0 -4.9 0M1504 236a2.45 2.45 0 1 0 4.9 0a2.45 2.45 0 1 0 -4.9 0M1505 242a2.45 2.45 0 1 0 4.9 0a2.45 2.45 0 1 0 -4.9 0M1505.1 260.5a2.45 2.45 0 1 0 4.9 0a2.45 2.45 0 1 0 -4.9 0M1508.3 238a2.45 2.45 0 1 0 4.9 0a2.45 2.45 0 1 0 -4.9 0M1509.5 286.5a2.45 2.45 0 1 0 4.9 0a2.45 2.45 0 1 0 -4.9 0M1512 289a2.45 2.45 0 1 0 4.9 0a2.45 2.45 0 1 0 -4.9 0M1514 291a2.45 2.45 0 1 0 4.9 0a2.45 2.45 0 1 0 -4.9 0M1513.5 375.5a2.45 2.45 0 1 0 4.9 0a2.45 2.45 0 1 0 -4.9 0M1515.7 296.4a2.45 2.45 0 1 0 4.9 0a2.45 2.45 0 1 0 -4.9 0M1515.7 335.9a2.45 2.45 0 1 0 4.9 0a2.45 2.45 0 1 0 -4.9 0M1517.6 299a2.45 2.45 0 1 0 4.9 0a2.45 2.45 0 1 0 -4.9 0M1517.6 383.3a2.45 2.45 0 1 0 4.9 0a2.45 2.45 0 1 0 -4.9 0M1520.1 403a2.45 2.45 0 1 0 4.9 0a2.45 2.45 0 1 0 -4.9 0M1522.2 297a2.45 2.45 0 1 0 4.9 0a2.45 2.45 0 1 0 -4.9 0M1524.2 300.1a2.45 2.45 0 1 0 4.9 0a2.45 2.45 0 1 0 -4.9 0M1524.2 335.3a2.45 2.45 0 1 0 4.9 0a2.45 2.45 0 1 0 -4.9 0M1520.1 178.3a2.45 2.45 0 1 0 4.9 0a2.45 2.45 0 1 0 -4.9 0M1521.2 183.6a2.45 2.45 0 1 0 4.9 0a2.45 2.45 0 1 0 -4.9 0M1522.5 205a2.45 2.45 0 1 0 4.9 0a2.45 2.45 0 1 0 -4.9 0M1519.3 214a2.45 2.45 0 1 0 4.9 0a2.45 2.45 0 1 0 -4.9 0M1523 247.5a2.45 2.45 0 1 0 4.9 0a2.45 2.45 0 1 0 -4.9 0M1522.2 257.5a2.45 2.45 0 1 0 4.9 0a2.45 2.45 0 1 0 -4.9 0M1522.8 266a2.45 2.45 0 1 0 4.9 0a2.45 2.45 0 1 0 -4.9 0M1519.5 274a2.45 2.45 0 1 0 4.9 0a2.45 2.45 0 1 0 -4.9 0M1531 346a2.45 2.45 0 1 0 4.9 0a2.45 2.45 0 1 0 -4.9 0M1528.8 352.5a2.45 2.45 0 1 0 4.9 0a2.45 2.45 0 1 0 -4.9 0M1526.5 358a2.45 2.45 0 1 0 4.9 0a2.45 2.45 0 1 0 -4.9 0M1530 360a2.45 2.45 0 1 0 4.9 0a2.45 2.45 0 1 0 -4.9 0M1533.5 297a2.45 2.45 0 1 0 4.9 0a2.45 2.45 0 1 0 -4.9 0M1534.5 304a2.45 2.45 0 1 0 4.9 0a2.45 2.45 0 1 0 -4.9 0M1531.3 230.3a2.45 2.45 0 1 0 4.9 0a2.45 2.45 0 1 0 -4.9 0M1531.3 264.3a2.45 2.45 0 1 0 4.9 0a2.45 2.45 0 1 0 -4.9 0M1533 236a2.45 2.45 0 1 0 4.9 0a2.45 2.45 0 1 0 -4.9 0M1534.8 171.4a2.45 2.45 0 1 0 4.9 0a2.45 2.45 0 1 0 -4.9 0M1540.5 184.7a2.45 2.45 0 1 0 4.9 0a2.45 2.45 0 1 0 -4.9 0M1544.2 169.1a2.45 2.45 0 1 0 4.9 0a2.45 2.45 0 1 0 -4.9 0M1544.2 186.2a2.45 2.45 0 1 0 4.9 0a2.45 2.45 0 1 0 -4.9 0M1544.2 193.8a2.45 2.45 0 1 0 4.9 0a2.45 2.45 0 1 0 -4.9 0M1545 240a2.45 2.45 0 1 0 4.9 0a2.45 2.45 0 1 0 -4.9 0M1542.3 245a2.45 2.45 0 1 0 4.9 0a2.45 2.45 0 1 0 -4.9 0M1545.5 332a2.45 2.45 0 1 0 4.9 0a2.45 2.45 0 1 0 -4.9 0M1542 343.5a2.45 2.45 0 1 0 4.9 0a2.45 2.45 0 1 0 -4.9 0M1542.3 352a2.45 2.45 0 1 0 4.9 0a2.45 2.45 0 1 0 -4.9 0M1540 369a2.45 2.45 0 1 0 4.9 0a2.45 2.45 0 1 0 -4.9 0M1542 374.5a2.45 2.45 0 1 0 4.9 0a2.45 2.45 0 1 0 -4.9 0M1542 427.5a2.45 2.45 0 1 0 4.9 0a2.45 2.45 0 1 0 -4.9 0M1540.5 418a2.45 2.45 0 1 0 4.9 0a2.45 2.45 0 1 0 -4.9 0M1544 413a2.45 2.45 0 1 0 4.9 0a2.45 2.45 0 1 0 -4.9 0M1502.6 419.8a2.45 2.45 0 1 0 4.9 0a2.45 2.45 0 1 0 -4.9 0M1505.4 415.1a2.45 2.45 0 1 0 4.9 0a2.45 2.45 0 1 0 -4.9 0M1508.7 416.9a2.45 2.45 0 1 0 4.9 0a2.45 2.45 0 1 0 -4.9 0M1511.2 421.3a2.45 2.45 0 1 0 4.9 0a2.45 2.45 0 1 0 -4.9 0M1514.9 414.2a2.45 2.45 0 1 0 4.9 0a2.45 2.45 0 1 0 -4.9 0M1517.7 417.8a2.45 2.45 0 1 0 4.9 0a2.45 2.45 0 1 0 -4.9 0M1521.2 420.5a2.45 2.45 0 1 0 4.9 0a2.45 2.45 0 1 0 -4.9 0M1523.2 423.7a2.45 2.45 0 1 0 4.9 0a2.45 2.45 0 1 0 -4.9 0M1525.9 416.4a2.45 2.45 0 1 0 4.9 0a2.45 2.45 0 1 0 -4.9 0M1530 413a2.45 2.45 0 1 0 4.9 0a2.45 2.45 0 1 0 -4.9 0M1532.5 411.5a2.45 2.45 0 1 0 4.9 0a2.45 2.45 0 1 0 -4.9 0M1535.8 420.9a2.45 2.45 0 1 0 4.9 0a2.45 2.45 0 1 0 -4.9 0M1548.1 355.9a2.45 2.45 0 1 0 4.9 0a2.45 2.45 0 1 0 -4.9 0M1548.1 364.5a2.45 2.45 0 1 0 4.9 0a2.45 2.45 0 1 0 -4.9 0M1548.1 413a2.45 2.45 0 1 0 4.9 0a2.45 2.45 0 1 0 -4.9 0M1552 355.9a2.45 2.45 0 1 0 4.9 0a2.45 2.45 0 1 0 -4.9 0M1552 421.4a2.45 2.45 0 1 0 4.9 0a2.45 2.45 0 1 0 -4.9 0M1567.5 299.1a2.45 2.45 0 1 0 4.9 0a2.45 2.45 0 1 0 -4.9 0M1567.5 421.4a2.45 2.45 0 1 0 4.9 0a2.45 2.45 0 1 0 -4.9 0M1567.5 857a2.45 2.45 0 1 0 4.9 0a2.45 2.45 0 1 0 -4.9 0M1197.8 280.8a2.45 2.45 0 1 0 4.9 0a2.45 2.45 0 1 0 -4.9 0M1197.8 258.4a2.45 2.45 0 1 0 4.9 0a2.45 2.45 0 1 0 -4.9 0M1199.8 235a2.45 2.45 0 1 0 4.9 0a2.45 2.45 0 1 0 -4.9 0M1203.2 263.9a2.45 2.45 0 1 0 4.9 0a2.45 2.45 0 1 0 -4.9 0M1199.8 229.1a2.45 2.45 0 1 0 4.9 0a2.45 2.45 0 1 0 -4.9 0M1211.2 206.2a2.45 2.45 0 1 0 4.9 0a2.45 2.45 0 1 0 -4.9 0M1208.8 238.9a2.45 2.45 0 1 0 4.9 0a2.45 2.45 0 1 0 -4.9 0M1211.2 265.5a2.45 2.45 0 1 0 4.9 0a2.45 2.45 0 1 0 -4.9 0M1205.8 309.8a2.45 2.45 0 1 0 4.9 0a2.45 2.45 0 1 0 -4.9 0M1205.8 276.5a2.45 2.45 0 1 0 4.9 0a2.45 2.45 0 1 0 -4.9 0M1193.8 355.2a2.45 2.45 0 1 0 4.9 0a2.45 2.45 0 1 0 -4.9 0M1193.8 347.8a2.45 2.45 0 1 0 4.9 0a2.45 2.45 0 1 0 -4.9 0M1211.5 323.2a2.45 2.45 0 1 0 4.9 0a2.45 2.45 0 1 0 -4.9 0M1231.4 355.2a2.45 2.45 0 1 0 4.9 0a2.45 2.45 0 1 0 -4.9 0M1239.8 352.8a2.45 2.45 0 1 0 4.9 0a2.45 2.45 0 1 0 -4.9 0M1231.4 347.6a2.45 2.45 0 1 0 4.9 0a2.45 2.45 0 1 0 -4.9 0M1239.8 341.3a2.45 2.45 0 1 0 4.9 0a2.45 2.45 0 1 0 -4.9 0M1231.4 378.6a2.45 2.45 0 1 0 4.9 0a2.45 2.45 0 1 0 -4.9 0M1251.8 370.2a2.45 2.45 0 1 0 4.9 0a2.45 2.45 0 1 0 -4.9 0M1251.8 232.4a2.45 2.45 0 1 0 4.9 0a2.45 2.45 0 1 0 -4.9 0M1243.8 302.6a2.45 2.45 0 1 0 4.9 0a2.45 2.45 0 1 0 -4.9 0M1251.8 299.9a2.45 2.45 0 1 0 4.9 0a2.45 2.45 0 1 0 -4.9 0M1243.8 387.1a2.45 2.45 0 1 0 4.9 0a2.45 2.45 0 1 0 -4.9 0M1243.8 267.2a2.45 2.45 0 1 0 4.9 0a2.45 2.45 0 1 0 -4.9 0M1243.8 315.7a2.45 2.45 0 1 0 4.9 0a2.45 2.45 0 1 0 -4.9 0M1251.8 306.2a2.45 2.45 0 1 0 4.9 0a2.45 2.45 0 1 0 -4.9 0M1270.2 377a2.45 2.45 0 1 0 4.9 0a2.45 2.45 0 1 0 -4.9 0M1279.2 332a2.45 2.45 0 1 0 4.9 0a2.45 2.45 0 1 0 -4.9 0M1279.2 331.6a2.45 2.45 0 1 0 4.9 0a2.45 2.45 0 1 0 -4.9 0M1279.2 374.9a2.45 2.45 0 1 0 4.9 0a2.45 2.45 0 1 0 -4.9 0M1290 300.1a2.45 2.45 0 1 0 4.9 0a2.45 2.45 0 1 0 -4.9 0M1290 294.5a2.45 2.45 0 1 0 4.9 0a2.45 2.45 0 1 0 -4.9 0M1296.5 390.2a2.45 2.45 0 1 0 4.9 0a2.45 2.45 0 1 0 -4.9 0M1288.4 383.6a2.45 2.45 0 1 0 4.9 0a2.45 2.45 0 1 0 -4.9 0M1310.1 353.9a2.45 2.45 0 1 0 4.9 0a2.45 2.45 0 1 0 -4.9 0M1310.1 413.2a2.45 2.45 0 1 0 4.9 0a2.45 2.45 0 1 0 -4.9 0M1310.1 350.8a2.45 2.45 0 1 0 4.9 0a2.45 2.45 0 1 0 -4.9 0M1312.8 317.4a2.45 2.45 0 1 0 4.9 0a2.45 2.45 0 1 0 -4.9 0M1312.8 413.7a2.45 2.45 0 1 0 4.9 0a2.45 2.45 0 1 0 -4.9 0M1323.8 345.8a2.45 2.45 0 1 0 4.9 0a2.45 2.45 0 1 0 -4.9 0M1328.7 389.9a2.45 2.45 0 1 0 4.9 0a2.45 2.45 0 1 0 -4.9 0M1323.8 342.2a2.45 2.45 0 1 0 4.9 0a2.45 2.45 0 1 0 -4.9 0M1328.7 390.2a2.45 2.45 0 1 0 4.9 0a2.45 2.45 0 1 0 -4.9 0M1319.3 346a2.45 2.45 0 1 0 4.9 0a2.45 2.45 0 1 0 -4.9 0M1503.6 197.4a2.45 2.45 0 1 0 4.9 0a2.45 2.45 0 1 0 -4.9 0M1507 187.5a2.45 2.45 0 1 0 4.9 0a2.45 2.45 0 1 0 -4.9 0M1507.8 385.3a2.45 2.45 0 1 0 4.9 0a2.45 2.45 0 1 0 -4.9 0M1507.8 252.8a2.45 2.45 0 1 0 4.9 0a2.45 2.45 0 1 0 -4.9 0M1502.6 276.5a2.45 2.45 0 1 0 4.9 0a2.45 2.45 0 1 0 -4.9 0M1502.6 242.7a2.45 2.45 0 1 0 4.9 0a2.45 2.45 0 1 0 -4.9 0M1507.8 305a2.45 2.45 0 1 0 4.9 0a2.45 2.45 0 1 0 -4.9 0M1507.8 262.3a2.45 2.45 0 1 0 4.9 0a2.45 2.45 0 1 0 -4.9 0M1507.8 385.7a2.45 2.45 0 1 0 4.9 0a2.45 2.45 0 1 0 -4.9 0M1502.6 391.6a2.45 2.45 0 1 0 4.9 0a2.45 2.45 0 1 0 -4.9 0M1502.8 372.5a2.45 2.45 0 1 0 4.9 0a2.45 2.45 0 1 0 -4.9 0M1512.2 404.6a2.45 2.45 0 1 0 4.9 0a2.45 2.45 0 1 0 -4.9 0M1502.8 383.7a2.45 2.45 0 1 0 4.9 0a2.45 2.45 0 1 0 -4.9 0M1502.8 385.3a2.45 2.45 0 1 0 4.9 0a2.45 2.45 0 1 0 -4.9 0M1502.8 379.3a2.45 2.45 0 1 0 4.9 0a2.45 2.45 0 1 0 -4.9 0M1523 284.9a2.45 2.45 0 1 0 4.9 0a2.45 2.45 0 1 0 -4.9 0M1518.9 233.8a2.45 2.45 0 1 0 4.9 0a2.45 2.45 0 1 0 -4.9 0M1518.9 199.1a2.45 2.45 0 1 0 4.9 0a2.45 2.45 0 1 0 -4.9 0M1523 213.5a2.45 2.45 0 1 0 4.9 0a2.45 2.45 0 1 0 -4.9 0M1523 215.5a2.45 2.45 0 1 0 4.9 0a2.45 2.45 0 1 0 -4.9 0M1537.2 379.3a2.45 2.45 0 1 0 4.9 0a2.45 2.45 0 1 0 -4.9 0M1526.5 411.4a2.45 2.45 0 1 0 4.9 0a2.45 2.45 0 1 0 -4.9 0M1534.3 306.6a2.45 2.45 0 1 0 4.9 0a2.45 2.45 0 1 0 -4.9 0M1537.2 332.6a2.45 2.45 0 1 0 4.9 0a2.45 2.45 0 1 0 -4.9 0M1534.3 315.8a2.45 2.45 0 1 0 4.9 0a2.45 2.45 0 1 0 -4.9 0M1542.6 232.2a2.45 2.45 0 1 0 4.9 0a2.45 2.45 0 1 0 -4.9 0M1542.6 207.7a2.45 2.45 0 1 0 4.9 0a2.45 2.45 0 1 0 -4.9 0M1545.5 279.6a2.45 2.45 0 1 0 4.9 0a2.45 2.45 0 1 0 -4.9 0M1540 270.7a2.45 2.45 0 1 0 4.9 0a2.45 2.45 0 1 0 -4.9 0M1545.5 314.3a2.45 2.45 0 1 0 4.9 0a2.45 2.45 0 1 0 -4.9 0M1540 260.3a2.45 2.45 0 1 0 4.9 0a2.45 2.45 0 1 0 -4.9 0M1540 358.6a2.45 2.45 0 1 0 4.9 0a2.45 2.45 0 1 0 -4.9 0" fill="#b482f5"/>
<circle cx="460.2" cy="859.3" r="2.45" fill="#8a8a8a"/>
<path d="M367.1 81V862M31 484.4H1661" stroke="#b482f5" stroke-opacity="0.3" stroke-width="1.7" fill="none"/>
<circle cx="366.4" cy="482.6" r="4.6" fill="#b482f5" fill-opacity="0.38"/>
<rect x="374" y="474.3" width="83.6" height="28.2" rx="2.5" fill="#2c2c2c" fill-opacity="0.96"/>
<text x="377.6" y="487.1" class="tp" textLength="76.3" lengthAdjust="spacingAndGlyphs">Sa, 11.11. <tspan fill="#8e8e8e">|</tspan> 13:23:16</text>
<text x="377.6" y="498" class="tp tb" textLength="21.5" lengthAdjust="spacingAndGlyphs">54 W</text>
<text x="23.4" y="865.5" text-anchor="end" class="ax">0</text>
<text x="23.4" y="795.3" text-anchor="end" class="ax">10</text>
<text x="23.4" y="723.3" text-anchor="end" class="ax">20</text>
<text x="23.4" y="652.5" text-anchor="end" class="ax">30</text>
<text x="23.4" y="582.3" text-anchor="end" class="ax">40</text>
<text x="23.4" y="510.3" text-anchor="end" class="ax">50</text>
<text x="23.4" y="439.2" text-anchor="end" class="ax">60</text>
<text x="23.4" y="369.4" text-anchor="end" class="ax">70</text>
<text x="23.4" y="297.4" text-anchor="end" class="ax">80</text>
<text x="23.4" y="226.5" text-anchor="end" class="ax">90</text>
<text x="23.4" y="156.3" text-anchor="end" class="ax">100</text>
<text x="23.4" y="84.3" text-anchor="end" class="ax">110</text>
<text x="135.4" y="877.2" text-anchor="middle" class="ax xl">Sa, 12:00</text>
<text x="468.1" y="877.2" text-anchor="middle" class="ax xl">Sa, 14:00</text>
<text x="800.8" y="877.2" text-anchor="middle" class="ax xl">Sa, 16:00</text>
<text x="1133.5" y="877.2" text-anchor="middle" class="ax xl">Sa, 18:00</text>
<text x="1466.2" y="877.2" text-anchor="middle" class="ax xl">Sa, 20:00</text>
</svg>
<div class="zoom">Zoom aus</div>
<div class="foot">Schließen</div>
</body></html>
